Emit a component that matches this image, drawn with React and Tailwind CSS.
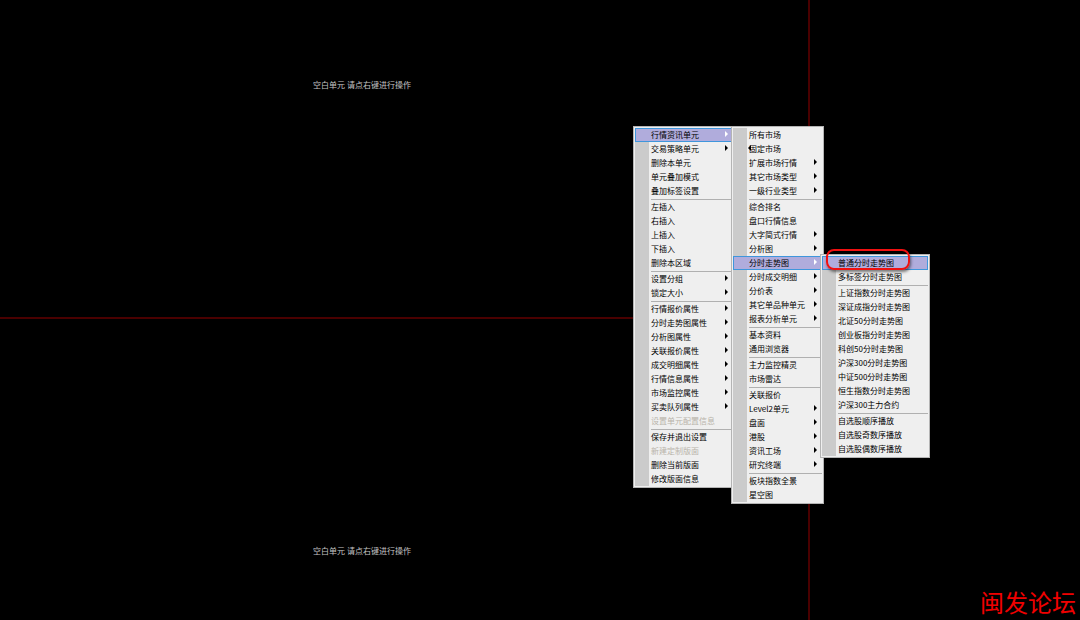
import { useState } from "react";

const SEP = "-";

const unitMenu = [
  { label: "行情资讯单元", sub: true },
  { label: "交易策略单元", sub: true },
  { label: "删除本单元" },
  { label: "单元叠加模式" },
  { label: "叠加标签设置" },
  SEP,
  { label: "左插入" },
  { label: "右插入" },
  { label: "上插入" },
  { label: "下插入" },
  { label: "删除本区域" },
  SEP,
  { label: "设置分组", sub: true },
  { label: "锁定大小", sub: true },
  SEP,
  { label: "行情报价属性", sub: true },
  { label: "分时走势图属性", sub: true },
  { label: "分析图属性", sub: true },
  { label: "关联报价属性", sub: true },
  { label: "成交明细属性", sub: true },
  { label: "行情信息属性", sub: true },
  { label: "市场监控属性", sub: true },
  { label: "买卖队列属性", sub: true },
  { label: "设置单元配置信息", disabled: true },
  SEP,
  { label: "保存并退出设置" },
  { label: "新建定制版面", disabled: true },
  { label: "删除当前版面" },
  { label: "修改版面信息" },
];

const quoteMenu = [
  { label: "所有市场" },
  { label: "固定市场" },
  { label: "扩展市场行情", sub: true },
  { label: "其它市场类型", sub: true },
  { label: "一级行业类型", sub: true },
  SEP,
  { label: "综合排名" },
  { label: "盘口行情信息" },
  { label: "大字简式行情", sub: true },
  { label: "分析图", sub: true },
  { label: "分时走势图", sub: true },
  { label: "分时成交明细", sub: true },
  { label: "分价表", sub: true },
  { label: "其它单品种单元", sub: true },
  { label: "报表分析单元", sub: true },
  SEP,
  { label: "基本资料" },
  { label: "通用浏览器" },
  SEP,
  { label: "主力监控精灵" },
  { label: "市场雷达" },
  SEP,
  { label: "关联报价" },
  { label: "Level2单元", sub: true },
  { label: "盘面", sub: true },
  { label: "港股", sub: true },
  { label: "资讯工场", sub: true },
  { label: "研究终端", sub: true },
  SEP,
  { label: "板块指数全景" },
  { label: "星空图" },
];

const trendMenu = [
  { label: "普通分时走势图" },
  { label: "多标签分时走势图" },
  SEP,
  { label: "上证指数分时走势图" },
  { label: "深证成指分时走势图" },
  { label: "北证50分时走势图" },
  { label: "创业板指分时走势图" },
  { label: "科创50分时走势图" },
  { label: "沪深300分时走势图" },
  { label: "中证500分时走势图" },
  { label: "恒生指数分时走势图" },
  { label: "沪深300主力合约" },
  SEP,
  { label: "自选股顺序播放" },
  { label: "自选股奇数序播放" },
  { label: "自选股偶数序播放" },
];

const SubArrow = ({ active }) => (
  <svg width="3" height="6" viewBox="0 0 3 6" className={`mt-0.5 shrink-0 self-start ${active ? "fill-white" : "fill-black"}`}>
    <path d="M0 0 L3 3 L0 6 Z" />
  </svg>
);

const Menu = ({ name, items, active, onSelect, className }) => (
  <div
    role="menu"
    aria-label={name}
    className={`absolute border border-[#b4b4b4] bg-[#efefef] p-px ${className}`}
  >
    <div className="bg-linear-to-r from-[#cbcbcb] from-[14px] to-transparent to-[14px]">
      {items.map((item, i) =>
        item === SEP ? (
          <div key={i} role="separator" className="ml-4 h-0.5 border-b border-[#b0b0b0]" />
        ) : (
          <button
            key={i}
            type="button"
            role="menuitem"
            disabled={item.disabled}
            onClick={() => onSelect(item.label)}
            className={`flex h-3.5 w-full items-center justify-between border pr-1 pl-[15px] text-left text-[8px] leading-3 whitespace-nowrap ${
              item.label === active ? "border-[#3f96dc] bg-[#b0acdc]" : "border-transparent"
            } ${item.disabled ? "text-[#b9b4aa]" : "text-black"}`}
          >
            <span>{item.label}</span>
            {item.sub && <SubArrow active={item.label === active} />}
          </button>
        )
      )}
    </div>
  </div>
);

const EmptyCell = ({ className }) => (
  <section className={`flex justify-center pr-[84px] text-[8px] leading-3 text-[#c4c4c4] ${className}`}>
    <p>空白单元 请点右键进行操作</p>
  </section>
);

const App = () => {
  const [unit, setUnit] = useState("行情资讯单元");
  const [quote, setQuote] = useState("分时走势图");
  const [trend, setTrend] = useState("普通分时走势图");

  return (
    <main className="relative flex min-h-screen overflow-hidden bg-black font-['Noto_Sans_CJK_SC',sans-serif]">
      {/* Layout cells */}
      <div className="flex w-3/4 flex-col border-r-2 border-[#4a0000]">
        <EmptyCell className="h-[319px] border-b-2 border-[#4a0000] pt-[79px]" />
        <EmptyCell className="flex-1 pt-[226px]" />
      </div>
      <div className="flex flex-1 items-end justify-end px-1">
        <p className="text-2xl leading-9 text-[#f00000]">闽发论坛</p>
      </div>

      {/* Context menus */}
      <Menu name="单元" items={unitMenu} active={unit} onSelect={setUnit} className="top-[126px] left-[633px] w-[102px]" />
      <Menu name="行情资讯单元" items={quoteMenu} active={quote} onSelect={setQuote} className="top-[126px] left-[731px] w-[93px]" />
      <Menu name="分时走势图" items={trendMenu} active={trend} onSelect={setTrend} className="top-[254px] left-[820px] w-[110px]" />

      {/* Pointer tip */}
      <svg width="3" height="6" viewBox="0 0 3 6" className="absolute top-[145px] left-[748px]">
        <path d="M3 0 L0 3 L3 6 Z" />
      </svg>

      {/* Highlight ring */}
      <div className="pointer-events-none absolute top-[249px] left-[826px] h-[21px] w-[84px] rounded-lg border-2 border-[#f01010] shadow-[1px_2px_3px_rgba(0,0,0,0.5)]" />
    </main>
  );
};

export default App;
